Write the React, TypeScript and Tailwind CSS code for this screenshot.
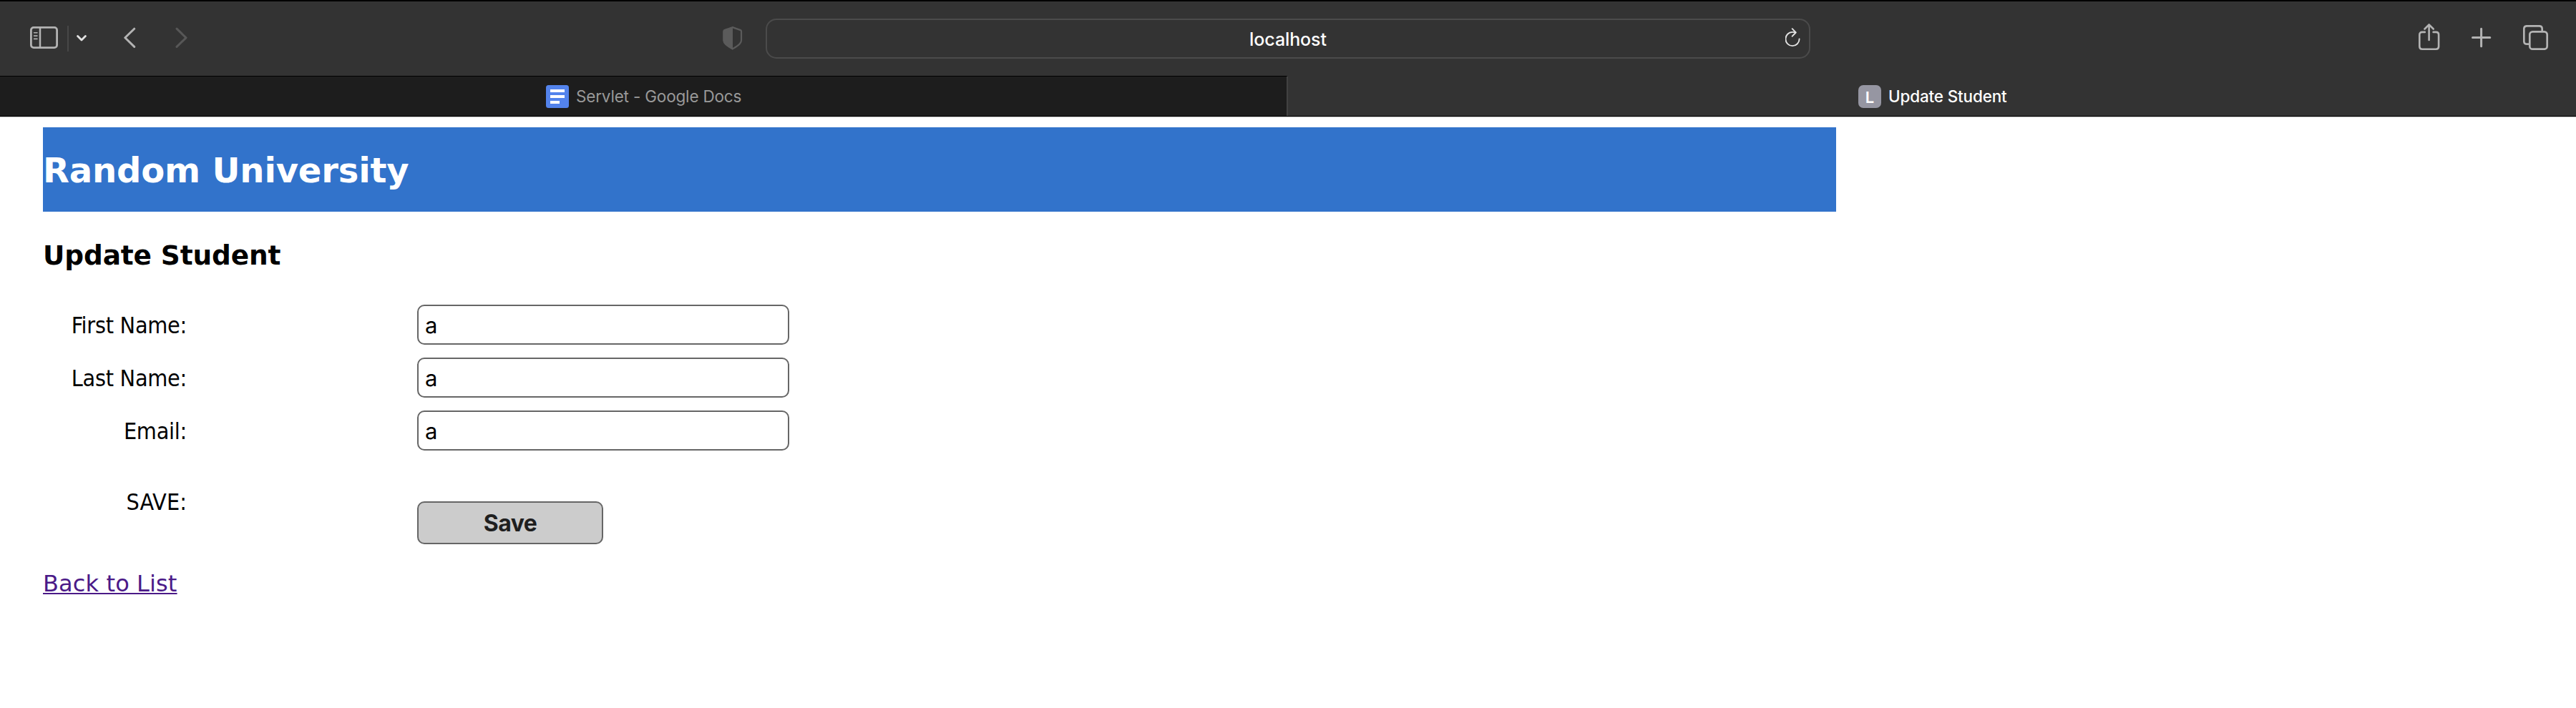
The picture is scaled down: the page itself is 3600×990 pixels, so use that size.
import React from "react";

function SidebarIcon() {
  return (
    <svg width="39" height="31" viewBox="0 0 39 31" fill="none" stroke="#b3b3b3" strokeLinecap="round">
      <rect x="1.4" y="1.4" width="36.2" height="28.2" rx="3.6" strokeWidth="2.8" />
      <path d="M14 1.5v28" strokeWidth="2.5" strokeLinecap="butt" />
      <path d="M5.6 8.7h4.4M5.6 13.1h4.4M5.6 17.4h4.4" strokeWidth="1.6" />
    </svg>
  );
}

function Toolbar() {
  return (
    <div className="flex h-[104px] bg-[#333333] pt-[24px]">
      <div className="flex w-[1010px] items-start">
        <div className="ml-[42px] mt-[11px]"><SidebarIcon /></div>
        <div className="ml-[13px] mt-[10px] h-[36px] w-[2px] bg-[#474747]" />
        <svg className="ml-[11px] mt-[23px]" width="14" height="9" viewBox="0 0 14 9" fill="none" stroke="#e2e2e2" strokeWidth="2.8" strokeLinecap="round" strokeLinejoin="round">
          <path d="M1.6 1.6L7 7l5.4-5.4" />
        </svg>
        <svg className="ml-[52px] mt-[12px]" width="17" height="30" viewBox="0 0 17 30" fill="none" stroke="#b3b3b3" strokeWidth="3" strokeLinecap="round" strokeLinejoin="round">
          <path d="M14.700 2.2L1.800 14.800 14.700 27.400" />
        </svg>
        <svg className="ml-[55px] mt-[12px]" width="17" height="30" viewBox="0 0 17 30" fill="none" stroke="#575757" strokeWidth="3" strokeLinecap="round" strokeLinejoin="round">
          <path d="M2 2.2l13 12.600L2 27.400" />
        </svg>
      </div>
      <svg className="mt-[10px]" width="28" height="35" viewBox="0 0 28 35">
        <path d="M13.7 2.1L24.9 6.1Q26 6.6 26 8v12.2q0 2.6-2 4.8-3.3 3.6-10.3 7.4-7-3.8-10.3-7.4-2-2.2-2-4.8V8q0-1.4 1.1-1.9z" fill="none" stroke="#5b5b5b" strokeWidth="2.2" />
        <path d="M14 1.4L2.2 5.6Q.6 6.3.6 8v12.4Q.6 24 3.6 26.500 8 30.600 14 33.500z" fill="#5b5b5b" />
      </svg>
      <div className="ml-[32px] flex h-[56px] w-[1460px] rounded-[15px] border-2 border-[#4b4b4b]">
        <div className="w-[1423px] pl-[4px] pt-[7px] text-center text-[25px] leading-[40px] text-white">
          <span className="inline-block pl-[29px] font-medium tracking-[-0.1px]">localhost</span>
        </div>
        <svg className="mt-[11px]" width="24" height="28" viewBox="0 0 24 28" fill="none" stroke="#e2e2e2" strokeWidth="1.9" strokeLinecap="round" strokeLinejoin="round">
          <path d="M19.600 15.400a9.600 9.600 0 1 1-9.600-9.500q2 0 4.400.5" />
          <path d="M9.700 1.200l5 5.300-5 5.200" />
        </svg>
      </div>
      <div className="flex items-start">
        <svg className="ml-[850px] mt-[7px]" width="30" height="38" viewBox="0 0 30 38" fill="none" stroke="#b3b3b3" strokeWidth="2.6" strokeLinecap="round" strokeLinejoin="round">
          <path d="M8.800 11.900H5q-3.700 0-3.700 3.700v16.400q0 3.700 3.700 3.700h19.400q3.700 0 3.700-3.700V15.600q0-3.700-3.700-3.700h-3.800" />
          <path d="M14.600 23V2M8.500 7.500l6.100-6 6.100 6" />
        </svg>
        <svg className="ml-[44px] mt-[12px]" width="28" height="29" viewBox="0 0 28 29" fill="none" stroke="#b3b3b3" strokeWidth="3" strokeLinecap="round">
          <path d="M1.500 14.500h24.300M13.600 2.300v24.400" />
        </svg>
        <svg className="ml-[44px] mt-[9px]" width="36" height="36" viewBox="0 0 36 36" fill="none" stroke="#b3b3b3" strokeWidth="2.700">
          <path d="M9.300 26.600H5.500q-4.200 0-4.200-4.200V5.500q0-4.200 4.200-4.200h17q4.200 0 4.200 4.200v3.800" />
          <rect x="9.300" y="9.300" width="24.400" height="24.400" rx="4" />
        </svg>
      </div>
    </div>
  );
}

function Tabs() {
  return (
    <div className="flex h-[56px] bg-[#333333] text-[22.500px] leading-[28px]">
      <div className="flex w-[1800px] border-r-2 border-t border-r-[#424242] border-t-black bg-[#1d1d1d] pl-[763px] pt-[12px]">
        <svg width="32" height="32" viewBox="0 0 32 32">
          <rect width="32" height="32" rx="3.500" fill="#5383ec" />
          <path d="M6 6h20v4H6zM6 14h20v4H6zM6 22h13v4H6z" fill="#fff" />
        </svg>
        <span className="ml-[10px] mt-[2px] whitespace-nowrap tracking-[-0.18px] text-[#999999]">Servlet - Google Docs</span>
      </div>
      <div className="flex pl-[797px] pt-[13px]">
        <div className="h-[32px] w-[32px] rounded-[7px] bg-[#9696a2] text-center text-[22px] font-semibold leading-[34px] text-white">L</div>
        <span className="ml-[10px] mt-[2px] whitespace-nowrap font-medium tracking-[-0.17px] text-white">Update Student</span>
      </div>
    </div>
  );
}

function Field({ label }: { label: string }) {
  return (
    <div className="flex h-[74px]">
      <label className="w-[201px] pt-[9px] text-right font-['DejaVu_Sans_Condensed','DejaVu_Sans',sans-serif] text-[32px] leading-[40px]">
        <span className="whitespace-nowrap tracking-[-0.25px]">{label}</span>
      </label>
      <input
        defaultValue="a"
        className="ml-[322px] h-[56px] w-[520px] rounded-[10px] border-2 border-[#666666] bg-white px-[9px] pt-px font-['Inter',sans-serif] text-[31px] leading-[40px] text-black"
      />
    </div>
  );
}

export default function App() {
  return (
    <div className="h-[990px] w-[3600px] overflow-hidden bg-white font-['Inter',sans-serif] text-black">
      <header className="border-t-2 border-black">
        <Toolbar />
        <Tabs />
        <div className="h-px bg-black" />
        <div className="h-px bg-[#bdbdbd]" />
      </header>
      <main className="ml-[60px] pt-[14px] font-['DejaVu_Sans',sans-serif]">
        <div className="h-[118px] w-[2506px] bg-[#3273cb] pt-[30px]">
          <h2 className="text-[48px] font-bold leading-[60px] text-white"><span className="tracking-[-0.15px]">Random University</span></h2>
        </div>
        <h3 className="mt-[36px] text-[37.440px] font-bold leading-[50px]"><span className="tracking-[-0.1px]">Update Student</span></h3>
        <form className="mt-[44px]">
          <Field label="First Name:" />
          <Field label="Last Name:" />
          <Field label="Email:" />
          <div className="flex h-[113px]">
            <label className="w-[201px] pt-[34px] text-right font-['DejaVu_Sans_Condensed','DejaVu_Sans',sans-serif] text-[32px] leading-[40px]">
              <span className="tracking-[0.1px]">SAVE:</span>
            </label>
            <button type="button" className="ml-[322px] mt-[53px] h-[60px] w-[260px] rounded-[10px] border-2 border-[#666666] bg-[#cccccc] pt-[2px] font-['Inter',sans-serif] text-[32px] font-bold leading-[40px] text-[#1f1f1f]">
              <span className="tracking-[-0.5px]">Save</span>
            </button>
          </div>
        </form>
        <a href="#" className="mt-[35px] inline-block text-[32px] leading-[40px] tracking-[0.12px] text-[#4b1a88] underline decoration-2 underline-offset-[2px]">Back to List</a>
      </main>
    </div>
  );
}
